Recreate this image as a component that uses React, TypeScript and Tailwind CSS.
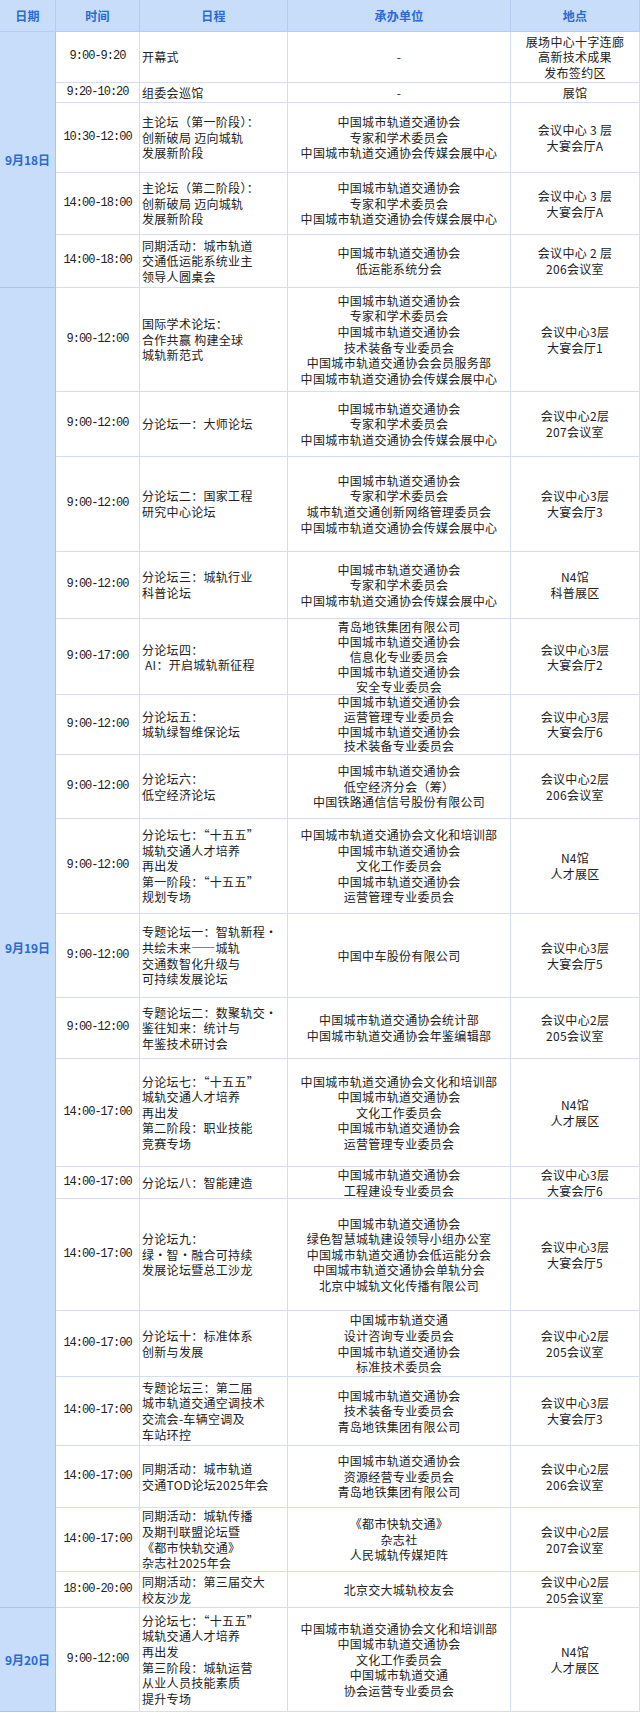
import React from "react";

type Row = { t: string; s: string[]; o: string[]; l: string[]; h: number };
type Day = { d: string; rows: Row[] };

const A = "中国城市轨道交通协会";
const ZJ = "专家和学术委员会";
const CM = "中国城市轨道交通协会传媒会展中心";

const days: Day[] = [
  {
    d: "9月18日",
    rows: [
      { t: "9:00-9:20", s: ["开幕式"], o: ["-"], l: ["展场中心十字连廊", "高新技术成果", "发布签约区"], h: 51 },
      { t: "9:20-10:20", s: ["组委会巡馆"], o: ["-"], l: ["展馆"], h: 20 },
      { t: "10:30-12:00", s: ["主论坛（第一阶段）：", "创新破局 迈向城轨", "发展新阶段"], o: [A, ZJ, CM], l: ["会议中心 3 层", "大宴会厅A"], h: 70 },
      { t: "14:00-18:00", s: ["主论坛（第二阶段）：", "创新破局 迈向城轨", "发展新阶段"], o: [A, ZJ, CM], l: ["会议中心 3 层", "大宴会厅A"], h: 62 },
      { t: "14:00-18:00", s: ["同期活动：城市轨道", "交通低运能系统业主", "领导人圆桌会"], o: [A, "低运能系统分会"], l: ["会议中心 2 层", "206会议室"], h: 53 },
    ],
  },
  {
    d: "9月19日",
    rows: [
      { t: "9:00-12:00", s: ["国际学术论坛：", "合作共赢 构建全球", "城轨新范式"], o: [A, ZJ, A, "技术装备专业委员会", "中国城市轨道交通协会会员服务部", CM], l: ["会议中心3层", "大宴会厅1"], h: 104 },
      { t: "9:00-12:00", s: ["分论坛一：大师论坛"], o: [A, ZJ, CM], l: ["会议中心2层", "207会议室"], h: 65 },
      { t: "9:00-12:00", s: ["分论坛二：国家工程", "研究中心论坛"], o: [A, ZJ, "城市轨道交通创新网络管理委员会", CM], l: ["会议中心3层", "大宴会厅3"], h: 95 },
      { t: "9:00-12:00", s: ["分论坛三：城轨行业", "科普论坛"], o: [A, ZJ, CM], l: ["N4馆", "科普展区"], h: 67 },
      { t: "9:00-17:00", s: ["分论坛四：", " AI：开启城轨新征程"], o: ["青岛地铁集团有限公司", A, "信息化专业委员会", A, "安全专业委员会"], l: ["会议中心3层", "大宴会厅2"], h: 76 },
      { t: "9:00-12:00", s: ["分论坛五：", "城轨绿智维保论坛"], o: [A, "运营管理专业委员会", A, "技术装备专业委员会"], l: ["会议中心3层", "大宴会厅6"], h: 60 },
      { t: "9:00-12:00", s: ["分论坛六：", "低空经济论坛"], o: [A, "低空经济分会（筹）", "中国铁路通信信号股份有限公司"], l: ["会议中心2层", "206会议室"], h: 64 },
      { t: "9:00-12:00", s: ["分论坛七：“十五五”", "城轨交通人才培养", "再出发", "第一阶段：“十五五”", "规划专场"], o: ["中国城市轨道交通协会文化和培训部", A, "文化工作委员会", A, "运营管理专业委员会"], l: ["N4馆", "人才展区"], h: 95 },
      { t: "9:00-12:00", s: ["专题论坛一：智轨新程·", "共绘未来——城轨", "交通数智化升级与", "可持续发展论坛"], o: ["中国中车股份有限公司"], l: ["会议中心3层", "大宴会厅5"], h: 84 },
      { t: "9:00-12:00", s: ["专题论坛二：数聚轨交·", "鉴往知来：统计与", "年鉴技术研讨会"], o: ["中国城市轨道交通协会统计部", "中国城市轨道交通协会年鉴编辑部"], l: ["会议中心2层", "205会议室"], h: 61 },
      { t: "14:00-17:00", s: ["分论坛七：“十五五”", "城轨交通人才培养", "再出发", "第二阶段：职业技能", "竞赛专场"], o: ["中国城市轨道交通协会文化和培训部", A, "文化工作委员会", A, "运营管理专业委员会"], l: ["N4馆", "人才展区"], h: 108 },
      { t: "14:00-17:00", s: ["分论坛八：智能建造"], o: [A, "工程建设专业委员会"], l: ["会议中心3层", "大宴会厅6"], h: 32 },
      { t: "14:00-17:00", s: ["分论坛九：", "绿·智·融合可持续", "发展论坛暨总工沙龙"], o: [A, "绿色智慧城轨建设领导小组办公室", "中国城市轨道交通协会低运能分会", "中国城市轨道交通协会单轨分会", "北京中城轨文化传播有限公司"], l: ["会议中心3层", "大宴会厅5"], h: 112 },
      { t: "14:00-17:00", s: ["分论坛十：标准体系", "创新与发展"], o: ["中国城市轨道交通", "设计咨询专业委员会", A, "标准技术委员会"], l: ["会议中心2层", "205会议室"], h: 66 },
      { t: "14:00-17:00", s: ["专题论坛三：第二届", "城市轨道交通空调技术", "交流会-车辆空调及", "车站环控"], o: [A, "技术装备专业委员会", "青岛地铁集团有限公司"], l: ["会议中心3层", "大宴会厅3"], h: 69 },
      { t: "14:00-17:00", s: ["同期活动：城市轨道", "交通TOD论坛2025年会"], o: [A, "资源经营专业委员会", "青岛地铁集团有限公司"], l: ["会议中心2层", "206会议室"], h: 62 },
      { t: "14:00-17:00", s: ["同期活动：城轨传播", "及期刊联盟论坛暨", "《都市快轨交通》", "杂志社2025年会"], o: ["《都市快轨交通》", "杂志社", "人民城轨传媒矩阵"], l: ["会议中心2层", "207会议室"], h: 64 },
      { t: "18:00-20:00", s: ["同期活动：第三届交大", "校友沙龙"], o: ["北京交大城轨校友会"], l: ["会议中心2层", "205会议室"], h: 36 },
    ],
  },
  {
    d: "9月20日",
    rows: [
      { t: "9:00-12:00", s: ["分论坛七：“十五五”", "城轨交通人才培养", "再出发", "第三阶段：城轨运营", "从业人员技能素质", "提升专场"], o: ["中国城市轨道交通协会文化和培训部", A, "文化工作委员会", "中国城市轨道交通", "协会运营专业委员会"], l: ["N4馆", "人才展区"], h: 104 },
    ],
  },
];

function Lines({ items, lh }: { items: string[]; lh: number }) {
  return (
    <>
      {items.map((x, i) => (
        <div key={i} className="whitespace-pre" style={{ lineHeight: `${lh}px` }}>
          {x}
        </div>
      ))}
    </>
  );
}

function lineH(r: Row) {
  const n = Math.max(r.s.length, r.o.length, r.l.length);
  return Math.min(15.6, (r.h - 1) / n);
}

export default function App() {
  return (
    <div
      lang="zh-CN"
      className="w-[640px] bg-white font-['Noto_Sans_CJK_SC','Liberation_Sans',sans-serif] text-[12px] leading-[15.6px] tracking-[0.3px] text-[#222]"
    >
      <div className="flex h-[32px] bg-[#c7ddf9] border-b border-[#b4cdee] font-bold text-[#2a6ad4]">
        <div className="w-[56px] flex items-center justify-center border-r border-[#b4cdee]">日期</div>
        <div className="w-[84px] flex items-center justify-center border-r border-[#b4cdee]">时间</div>
        <div className="w-[148px] flex items-center justify-center border-r border-[#b4cdee]">日程</div>
        <div className="w-[223px] flex items-center justify-center border-r border-[#b4cdee]">承办单位</div>
        <div className="w-[129px] flex items-center justify-center border-r border-[#b4cdee]">地点</div>
      </div>
      {days.map((day) => (
        <div key={day.d} className="flex">
          <div className="w-[56px] shrink-0 flex items-center justify-center bg-[#c7ddf9] border-r border-b border-[#a9c5ec] font-bold text-[#2a6ad4] tracking-normal">
            {day.d}
          </div>
          <div className="flex flex-col">
            {day.rows.map((r, i) => {
              const lh = lineH(r);
              return (
                <div
                  key={i}
                  style={{ height: r.h }}
                  className="flex bg-white border-b border-[#d3def4]"
                >
                  <div className="w-[84px] shrink-0 flex items-center justify-center border-r border-[#d3def4] font-['Liberation_Mono',monospace] tracking-[-1px]">
                    {r.t}
                  </div>
                  <div className="w-[148px] shrink-0 flex flex-col justify-center pl-[2px] border-r border-[#d3def4]">
                    <Lines items={r.s} lh={lh} />
                  </div>
                  <div className="w-[223px] shrink-0 flex flex-col justify-center items-center text-center border-r border-[#d3def4]">
                    <Lines items={r.o} lh={lh} />
                  </div>
                  <div className="w-[129px] shrink-0 flex flex-col justify-center items-center text-center border-r border-[#d3def4]">
                    <Lines items={r.l} lh={lh} />
                  </div>
                </div>
              );
            })}
          </div>
        </div>
      ))}
    </div>
  );
}
